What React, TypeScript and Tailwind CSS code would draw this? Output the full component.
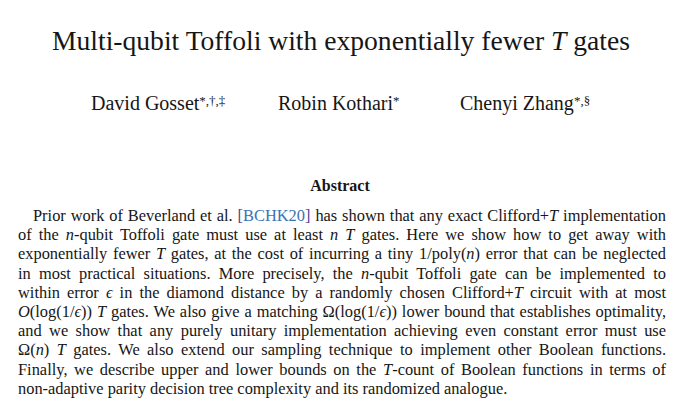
const serif = "font-['Liberation_Serif','Times_New_Roman',serif]"

function V({ children }: { children: React.ReactNode }) {
  return <span className="italic">{children}</span>
}

function Cite() {
  return (
    <span>
      <span className="text-[#5b3f8f]">[</span>
      <span className="text-[#3d72b4]">BCHK20</span>
      <span className="text-[#5b3f8f]">]</span>
    </span>
  )
}

const eps = <V>ϵ</V>

const lines: React.ReactNode[] = [
  <>Prior work of Beverland et al. <Cite /> has shown that any exact Clifford+<V>T</V> implementation</>,
  <>of the <V>n</V>-qubit Toffoli gate must use at least <V>n</V> <V>T</V> gates. Here we show how to get away with</>,
  <>exponentially fewer <V>T</V> gates, at the cost of incurring a tiny 1/poly(<V>n</V>) error that can be neglected</>,
  <>in most practical situations. More precisely, the <V>n</V>-qubit Toffoli gate can be implemented to</>,
  <>within error {eps} in the diamond distance by a randomly chosen Clifford+<V>T</V> circuit with at most</>,
  <><V>O</V>(log(1/{eps})) <V>T</V> gates. We also give a matching Ω(log(1/{eps})) lower bound that establishes optimality,</>,
  <>and we show that any purely unitary implementation achieving even constant error must use</>,
  <>Ω(<V>n</V>) <V>T</V> gates. We also extend our sampling technique to implement other Boolean functions.</>,
  <>Finally, we describe upper and lower bounds on the <V>T</V>-count of Boolean functions in terms of</>,
  <>non-adaptive parity decision tree complexity and its randomized analogue.</>,
]

function Author({ name, marks, className }: { name: string; marks: string; className?: string }) {
  return (
    <span className={className}>
      {name}
      <sup className="relative -top-[5px] text-[13px]">{marks}</sup>
    </span>
  )
}

export default function App() {
  return (
    <div className={`${serif} h-[408px] w-[680px] overflow-hidden bg-white text-[#161616]`}>
      <h1 className="pt-[24px] pl-[2px] text-center text-[27.6px] leading-[34px]">
        Multi-qubit Toffoli with exponentially fewer <V>T</V> gates
      </h1>

      <div className="mt-[33px] flex pl-[91px] text-[20px] leading-[24px]">
        <Author name="David Gosset" marks="*,†,‡" className="w-[187px]" />
        <Author name="Robin Kothari" marks="*" className="w-[182px]" />
        <Author name="Chenyi Zhang" marks="*,§" />
      </div>

      <h2 className="mt-[61px] text-center text-[16px] font-bold leading-[20px]">Abstract</h2>

      <div className="mt-[10px] px-[18px] pr-[14px] text-[16.4px] leading-[19.2px]">
        {lines.map((l, i) => (
          <div
            key={i}
            className={
              i === lines.length - 1
                ? "text-left"
                : i === 0
                  ? "pl-[15px] text-justify [text-align-last:justify]"
                  : "text-justify [text-align-last:justify]"
            }
          >
            {l}
          </div>
        ))}
      </div>
    </div>
  )
}
